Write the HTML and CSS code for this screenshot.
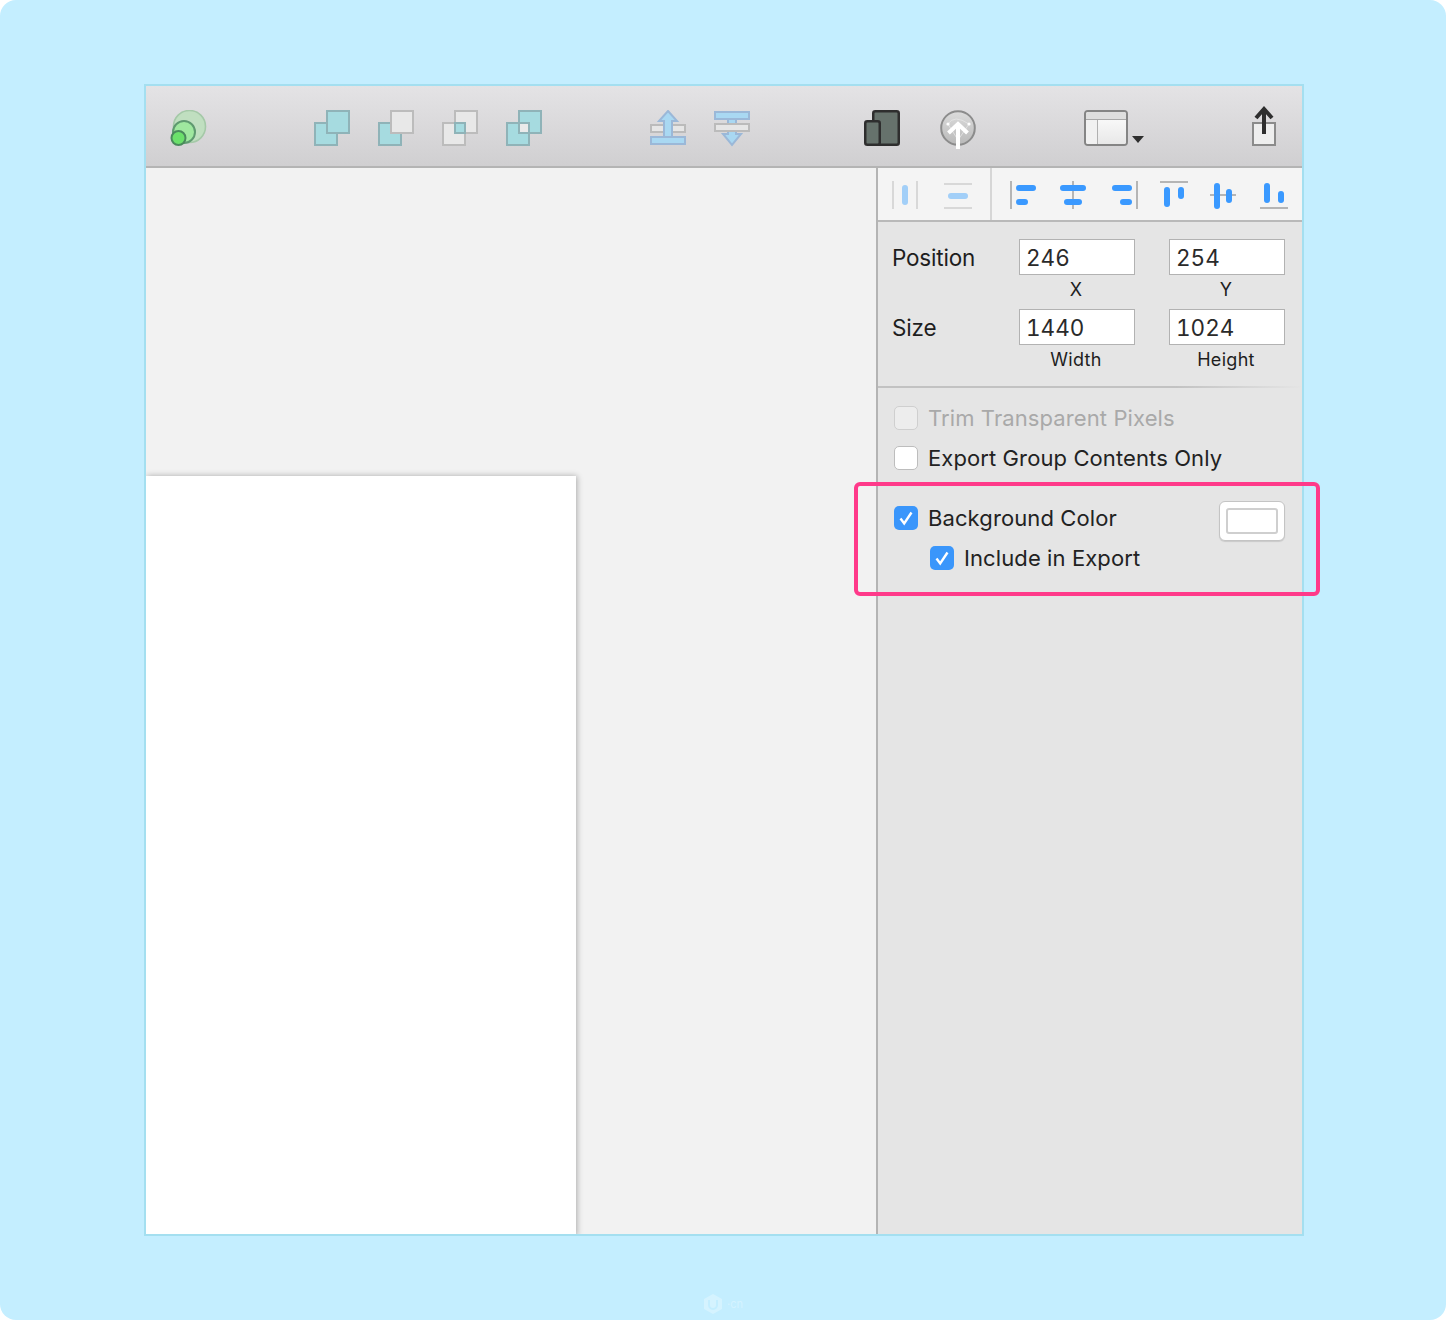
FILE: index.html
```html
<!DOCTYPE html>
<html lang="en">
<head>
<meta charset="utf-8">
<title>Sketch export settings</title>
<link rel="stylesheet" href="styles.css">
</head>
<body>
<div class="stage">
  <div class="window">
    <header class="toolbar">
      <svg class="tb tb-create" width="38" height="38" viewBox="0 0 38 38"><circle cx="19.500" cy="16.500" r="16" fill="#c0dfc0" stroke="#a5c9a8" stroke-width="1.600"/><circle cx="14" cy="22" r="11" fill="#9fe89f" stroke="#5f9a70" stroke-width="2"/><circle cx="8.500" cy="28" r="7" fill="#6be06b" stroke="#4a8a5c" stroke-width="2"/></svg>
      <svg class="tb tb-union" width="38" height="38" viewBox="0 0 38 38"><rect x="2" y="13" width="22" height="22" fill="#a6dbe0" stroke="#8fb3b8" stroke-width="2"/><rect x="14" y="1" width="22" height="22" fill="#a6dbe0" stroke="#8fb3b8" stroke-width="2"/></svg>
      <svg class="tb tb-gap" width="38" height="38" viewBox="0 0 38 38"><rect x="2" y="13" width="22" height="22" fill="#a6dbe0" stroke="#8fb3b8" stroke-width="2"/><rect x="14" y="1" width="22" height="22" fill="#e8e8e8" stroke="#bcbcbc" stroke-width="2"/></svg>
      <svg class="tb tb-gap" width="38" height="38" viewBox="0 0 38 38"><rect x="2" y="13" width="22" height="22" fill="#e8e8e8" stroke="#bcbcbc" stroke-width="2"/><rect x="14" y="1" width="22" height="22" fill="#e8e8e8" stroke="#bcbcbc" stroke-width="2"/><rect x="14" y="13" width="10" height="10" fill="#a6dbe0" stroke="#8fb3b8" stroke-width="2"/></svg>
      <svg class="tb tb-gap" width="38" height="38" viewBox="0 0 38 38"><rect x="2" y="13" width="22" height="22" fill="#a6dbe0" stroke="#8fb3b8" stroke-width="2"/><rect x="14" y="1" width="22" height="22" fill="#a6dbe0" stroke="#8fb3b8" stroke-width="2"/><rect x="14" y="13" width="10" height="10" fill="#eaeaea" stroke="#8fb3b8" stroke-width="2"/></svg>
      <svg class="tb tb-forward" width="38" height="38" viewBox="0 0 38 38"><rect x="2" y="15" width="34" height="7" fill="#e6e6e6" stroke="#bbb" stroke-width="2"/><rect x="2" y="27" width="34" height="7" fill="#a9d8f2" stroke="#9bb8d8" stroke-width="2"/><path d="M19 1 28 11H23V27H15V11H10Z" fill="#a9d8f2" stroke="#9bb8d8" stroke-width="2"/></svg>
      <svg class="tb tb-back" width="38" height="38" viewBox="0 0 38 38"><path d="M15 8H23V24H28L19 35 10 24H15Z" fill="#a9d8f2" stroke="#9bb8d8" stroke-width="2"/><rect x="2" y="2" width="34" height="7" fill="#a9d8f2" stroke="#9bb8d8" stroke-width="2"/><rect x="2" y="14" width="34" height="7" fill="#e6e6e6" stroke="#bbb" stroke-width="2"/></svg>
      <svg class="tb tb-devices" width="38" height="38" viewBox="0 0 38 38"><rect x="9.250" y="1.250" width="25.500" height="33.500" rx="2" fill="#66726c" stroke="#2e2e2e" stroke-width="2.500"/><rect x="1.250" y="11.250" width="14.500" height="23.500" rx="2" fill="#66726c" stroke="#2e2e2e" stroke-width="2.500"/></svg>
      <svg class="tb tb-cloud" width="38" height="40" viewBox="0 0 38 40"><defs><linearGradient id="cloudfill" x1="0" y1="0" x2="0" y2="1"><stop offset="0" stop-color="#dcdcdc"/><stop offset="1" stop-color="#b9b9b9"/></linearGradient></defs><circle cx="18" cy="18" r="16.800" fill="url(#cloudfill)" stroke="#8c8c8c" stroke-width="2"/><path d="M8 14Q14 4 29 14M8 14 18 30M29 14 18 30" stroke="#e6e6e6" stroke-width="0.800" fill="none"/><circle cx="8" cy="14" r="1.600" fill="#fff"/><circle cx="29" cy="14" r="1.600" fill="#fff"/><path d="M8.500 23 18 14 27.500 23M18 15V39" stroke="#fff" stroke-width="4" fill="none"/></svg>
      <div class="tb tb-view">
        <div class="view-box"><div class="view-top"></div><div class="view-body"><span class="view-side"></span><span class="view-main"></span></div></div>
        <span class="caret"></span>
      </div>
      <svg class="tb tb-share" width="26" height="42" viewBox="0 0 26 42"><rect x="2" y="18" width="22" height="22" fill="#eee" stroke="#8b8b8b" stroke-width="2"/><path d="M13 5V29" stroke="#2e2e2e" stroke-width="4" fill="none"/><path d="M5 13 13 4 21 13" stroke="#2e2e2e" stroke-width="4" fill="none"/></svg>
    </header>
    <div class="main">
      <section class="canvas"><div class="artboard"></div></section>
      <aside class="inspector">
        <div class="align-bar">
          <div class="align-group align-dim">
            <svg width="28" height="28" viewBox="0 0 28 28"><path d="M2 0V28M26 0V28" stroke="#d8d8d8" stroke-width="2"/><rect x="11" y="4" width="6" height="20" rx="3" fill="#a2cff8"/></svg>
            <svg width="28" height="28" viewBox="0 0 28 28"><path d="M0 3H28M0 27H28" stroke="#d8d8d8" stroke-width="2"/><rect x="4" y="12" width="20" height="6" rx="3" fill="#a2cff8"/></svg>
          </div>
          <div class="align-group align-main">
            <svg width="28" height="28" viewBox="0 0 28 28"><path d="M1 0V28" stroke="#b5b5b5" stroke-width="2"/><rect x="6" y="4" width="20" height="6" rx="3" fill="#3a99ff"/><rect x="6" y="18" width="12" height="6" rx="3" fill="#3a99ff"/></svg>
            <svg width="28" height="28" viewBox="0 0 28 28"><path d="M13 0V28" stroke="#b5b5b5" stroke-width="2"/><rect x="0" y="4" width="26" height="6" rx="3" fill="#3a99ff"/><rect x="4" y="18" width="18" height="6" rx="3" fill="#3a99ff"/></svg>
            <svg width="28" height="28" viewBox="0 0 28 28"><path d="M27 0V28" stroke="#b5b5b5" stroke-width="2"/><rect x="2" y="4" width="20" height="6" rx="3" fill="#3a99ff"/><rect x="10" y="18" width="12" height="6" rx="3" fill="#3a99ff"/></svg>
            <svg width="28" height="28" viewBox="0 0 28 28"><path d="M0 1H28" stroke="#b5b5b5" stroke-width="2"/><rect x="4" y="6" width="6" height="20" rx="3" fill="#3a99ff"/><rect x="18" y="6" width="6" height="12" rx="3" fill="#3a99ff"/></svg>
            <svg width="28" height="28" viewBox="0 0 28 28"><path d="M0 14H26" stroke="#b5b5b5" stroke-width="2"/><rect x="4" y="2" width="6" height="26" rx="3" fill="#3a99ff"/><rect x="16" y="8" width="6" height="14" rx="3" fill="#3a99ff"/></svg>
            <svg width="28" height="28" viewBox="0 0 28 28"><path d="M0 27H28" stroke="#b5b5b5" stroke-width="2"/><rect x="4" y="2" width="6" height="20" rx="3" fill="#3a99ff"/><rect x="18" y="10" width="6" height="12" rx="3" fill="#3a99ff"/></svg>
          </div>
        </div>
        <div class="geometry">
          <span class="g-label">Position</span>
          <div class="g-field"><span class="g-input">246</span><span class="g-cap">X</span></div>
          <div class="g-field"><span class="g-input">254</span><span class="g-cap">Y</span></div>
          <span class="g-label">Size</span>
          <div class="g-field"><span class="g-input">1440</span><span class="g-cap">Width</span></div>
          <div class="g-field"><span class="g-input">1024</span><span class="g-cap">Height</span></div>
        </div>
        <div class="options">
          <label class="opt opt-disabled"><span class="cb cb-disabled"></span>Trim Transparent Pixels</label>
          <label class="opt"><span class="cb"></span>Export Group Contents Only</label>
          <div class="bg-row">
            <div class="bg-checks">
              <label class="opt"><span class="cb cb-on"><svg width="24" height="24" viewBox="0 0 24 24"><path d="M6.500 12.500 10.200 17.500 17.500 6.500" fill="none" stroke="#fff" stroke-width="2.400"/></svg></span>Background Color</label>
              <label class="opt opt-sub"><span class="cb cb-on"><svg width="24" height="24" viewBox="0 0 24 24"><path d="M6.500 12.500 10.200 17.500 17.500 6.500" fill="none" stroke="#fff" stroke-width="2.400"/></svg></span>Include in Export</label>
            </div>
            <div class="swatch"><span class="swatch-well"></span></div>
          </div>
        </div>
      </aside>
    </div>
  </div>
  <div class="highlight"></div>
  <div class="watermark"><svg width="20" height="20" viewBox="0 0 20 20"><path d="M10 0 19 5V15L10 20 1 15V5Z" fill="#d5f3ff"/><path d="M6 6V11A4 4 0 0 0 14 11V6" fill="none" stroke="#c4eeff" stroke-width="2"/></svg><span>·cn</span></div>
</div>
</body>
</html>
```
FILE: styles.css
```css
* { box-sizing: border-box; }
html, body { margin: 0; padding: 0; background: #fff; }
body { font-family: "Inter", "Noto Sans", "Liberation Sans", sans-serif; color: #1e1e1e; }
.stage {
  position: relative;
  width: 1446px;
  height: 1320px;
  padding: 84px 142px 84px 144px;
  background: #c4eeff;
  border-radius: 16px;
}
.window {
  display: flex;
  flex-direction: column;
  width: 1160px;
  height: 1152px;
  border: 2px solid #a4dff0;
  background: #f2f2f2;
}
.toolbar {
  position: relative;
  flex: none;
  height: 82px;
  display: flex;
  align-items: flex-start;
  padding: 24px 0 0 24px;
  background: linear-gradient(#e4e3e5, #d0cfd1);
  border-bottom: 2px solid #b4b4b4;
}
.tb { flex: none; display: block; }
.tb-union { margin-left: 105px; }
.tb-gap { margin-left: 26px; }
.tb-forward { margin-left: 106px; }
.tb-back { margin-left: 26px; }
.tb-devices { margin-left: 113px; }
.tb-cloud { margin-left: 38px; }
.tb-view { margin-left: 106px; display: flex; align-items: flex-end; gap: 4px; height: 36px; }
.tb-share { margin: -5px 0 0 107px; }
.view-box {
  width: 44px;
  height: 36px;
  border: 2px solid #858585;
  border-radius: 4px;
  overflow: hidden;
  display: flex;
  flex-direction: column;
  background: #f2f2f2;
}
.view-top { height: 8px; background: #dedede; border-bottom: 1px solid #a8a8a8; }
.view-body { flex: 1; display: flex; }
.view-side { width: 12px; background: #f1f1f1; border-right: 1px solid #b0b0b0; }
.view-main { flex: 1; background: linear-gradient(#f8f8f8, #e8e8e8); }
.caret {
  width: 0;
  height: 0;
  margin-bottom: 3px;
  border-left: 6px solid transparent;
  border-right: 6px solid transparent;
  border-top: 7px solid #2f2f2f;
}
.main { flex: 1; display: flex; min-height: 0; }
.canvas { position: relative; flex: 1; overflow: hidden; padding-top: 308px; }
.artboard {
  width: 430px;
  height: 760px;
  background: #fff;
  box-shadow: 1px 0 6px rgba(0, 0, 0, 0.3);
}
.inspector {
  flex: none;
  width: 426px;
  background: #e5e5e5;
  border-left: 2px solid #b4b4b4;
}
.align-bar {
  height: 54px;
  display: flex;
  background: #f4f4f4;
  border-bottom: 2px solid #b9b9b9;
}
.align-group { display: flex; align-items: center; padding-top: 2px; }
.align-dim {
  width: 114px;
  padding-left: 13px;
  gap: 25px;
  border-right: 2px solid #d6d6d6;
}
.align-main { padding-left: 18px; gap: 22px; }
.geometry {
  height: 166px;
  display: grid;
  grid-template-columns: 127px 150px 116px;
  grid-auto-rows: 70px;
  padding: 17px 0 0 14px;
  border-bottom: 2px solid;
  border-image: linear-gradient(to right, #c2c2c2, #c2c2c2 70%, #e5e5e5) 1;
}
.g-label { font-size: 22.500px; line-height: 38px; letter-spacing: -0.200px; }
.g-field { display: flex; flex-direction: column; width: 116px; }
.g-input {
  display: block;
  height: 36px;
  padding-left: 6px;
  background: #fff;
  border: 1px solid #b2b2b2;
  font-size: 22.500px;
  line-height: 35px;
  font-variant-numeric: tabular-nums;
  color: #2a2a2a;
}
.g-cap { padding-right: 2px; text-align: center; font-size: 18px; line-height: 22px; margin-top: 4px; letter-spacing: 0.300px; }
.options { padding: 10px 0 0 16px; }
.opt {
  display: flex;
  align-items: center;
  height: 40px;
  font-size: 22px;
  letter-spacing: 0.100px;
  color: #222;
}
.opt-disabled { color: #a9a9a9; }
.opt-sub { padding-left: 36px; }
.cb {
  flex: none;
  width: 24px;
  height: 24px;
  margin-right: 10px;
  border-radius: 5px;
  background: #fff;
  border: 1px solid #bdbdbd;
}
.cb-disabled { background: #ededed; border-color: #cfcfcf; }
.cb-on { background: #3a96fb; border: none; display: block; }
.cb-on svg { display: block; }
.bg-row { display: flex; justify-content: space-between; align-items: flex-start; width: 391px; margin-top: 20px; }
.swatch {
  width: 66px;
  height: 40px;
  margin-top: 3px;
  padding: 6px;
  background: #fff;
  border: 1px solid #c4c4c4;
  border-radius: 6px;
  box-shadow: 0 1px 1px rgba(0, 0, 0, 0.12);
}
.swatch-well {
  display: block;
  width: 100%;
  height: 100%;
  background: #fff;
  border: 2px solid #cfcfcf;
  border-radius: 3px;
}
.highlight {
  position: absolute;
  left: 854px;
  top: 482px;
  width: 466px;
  height: 114px;
  border: 4px solid #ff3a8a;
  border-radius: 6px;
}
.watermark {
  position: absolute;
  left: 703px;
  top: 1294px;
  display: flex;
  align-items: center;
  gap: 4px;
  color: #d5f3ff;
  font-size: 11px;
}
.watermark svg { display: block; }
```
